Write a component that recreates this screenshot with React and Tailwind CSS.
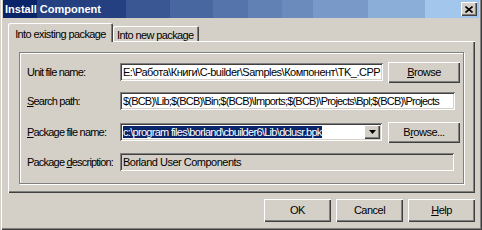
const font = "font-['Liberation_Sans',Arial,sans-serif] text-[11px] tracking-[-0.5px] text-black";

const raised =
  'bg-[#d4d0c8] shadow-[inset_1px_1px_#fff,inset_-1px_-1px_#404040,inset_-2px_-2px_#808080]';
const sunken =
  'shadow-[inset_1px_1px_#808080,inset_-1px_-1px_#fff,inset_2px_2px_#404040,inset_-2px_-2px_#d4d0c8]';

function Button({ children, className = '' }) {
  return (
    <div className={`${raised} flex items-center justify-center ${className}`}>
      <span className="leading-none">{children}</span>
    </div>
  );
}

function Edit({ width, children, disabled, className = '' }) {
  return (
    <div
      className={`${sunken} ${width} h-[18px] ${disabled ? 'bg-[#d4d0c8]' : 'bg-white'} flex items-center overflow-hidden whitespace-nowrap pl-[3px] pr-[2px] ${className}`}
    >
      {children}
    </div>
  );
}

function Row({ label, className = '', children }) {
  return (
    <div className={`flex items-center h-[22px] ${className}`}>
      <div className="w-[93px] shrink-0 whitespace-nowrap tracking-[-0.8px]">{label}</div>
      {children}
    </div>
  );
}

export default function App() {
  return (
    <div
      className={`${font} w-[482px] h-[230px] bg-[#d4d0c8] flex flex-col shadow-[inset_1px_0_#d4d0c8,inset_2px_0_#fff,inset_-1px_-1px_#404040,inset_-2px_-2px_#808080]`}
    >
      {/* title bar */}
      <div className="mx-[3px] h-[18px] flex items-center justify-between pl-[2px] pr-[2px] bg-[linear-gradient(to_right,#0a246a_34px,#244081_34px,#244081_123px,#3a5794_123px,#3a5794_167px,#4866a0_167px,#4866a0_210px,#5574ab_210px,#5574ab_245px,#6180b4_245px,#6180b4_279px,#6b8bbd_279px,#6b8bbd_310px,#799ac9_310px,#799ac9_365px,#8baed9_365px,#8baed9_422px,#a2c6ec_422px)]">
        <span className="text-white font-bold tracking-normal">Install Component</span>
        <div className={`${raised} w-[16px] h-[14px] flex items-center justify-center`}>
          <svg width="8" height="7" viewBox="0 0 8 7">
            <path d="M0.5 0.5 L7.5 6.5 M7.5 0.5 L0.5 6.5" stroke="#000" strokeWidth="1.6" />
          </svg>
        </div>
      </div>

      {/* tabs */}
      <div className="mt-[5px] pl-[8px] pr-[7px]">
        <div className="flex items-start h-[18px]">
          <div className="relative z-10 w-[105px] h-[19px] bg-[#d4d0c8] rounded-t-[2px] shadow-[inset_1px_1px_#fff,inset_-1px_0_#404040,inset_-2px_0_#808080] flex justify-center pt-[3px] tracking-[-0.6px]">
            Into existing package
          </div>
          <div className="mt-[3px] w-[86px] h-[15px] rounded-t-[2px] shadow-[inset_1px_1px_#fff,inset_-1px_0_#404040,inset_-2px_0_#808080] pl-[4px] pt-[1px] whitespace-nowrap tracking-[-0.6px]">
            Into new package
          </div>
        </div>

        <div className="h-[152px] pl-[11px] pt-[11px] shadow-[inset_1px_1px_#fff,inset_-1px_-1px_#404040,inset_-2px_-2px_#808080]">
          <div className="w-[445px] h-[132px] border border-[#808080] shadow-[1px_1px_0_#fff,inset_1px_1px_0_#fff] pl-[7px] pt-[8px]">
            <Row label="Unit file name:">
              <Edit width="w-[263px]">E:\Работа\Книги\C-builder\Samples\Компонент\TK_.CPP</Edit>
              <Button className="ml-[5px] w-[72px] h-[21px]">
                <u>B</u>rowse
              </Button>
            </Row>
            <Row
              className="mt-[7px]"
              label={
                <>
                  <u>S</u>earch path:
                </>
              }
            >
              <Edit width="w-[335px]" className="tracking-[-0.8px]">
                $(BCB)\Lib;$(BCB)\Bin;$(BCB)\Imports;$(BCB)\Projects\Bpl;$(BCB)\Projects
              </Edit>
            </Row>
            <Row
              className="mt-[9px]"
              label={
                <>
                  <u>P</u>ackage file name:
                </>
              }
            >
              <div className={`${sunken} w-[262px] h-[18px] bg-white flex items-center pl-[3px] pr-[2px]`}>
                <div className="flex-1 overflow-hidden whitespace-nowrap tracking-[-0.7px]">
                  <span className="bg-[#0a246a] text-white">
                    c:\program files\borland\cbuilder6\Lib\dclusr.bpk
                  </span>
                </div>
                <div className={`${raised} w-[16px] h-[14px] flex items-center justify-center shrink-0`}>
                  <svg width="7" height="4" viewBox="0 0 7 4">
                    <path d="M0 0 H7 L3.5 4 Z" fill="#000" />
                  </svg>
                </div>
              </div>
              <Button className="ml-[6px] w-[72px] h-[21px]">
                B<u>r</u>owse...
              </Button>
            </Row>
            <Row
              className="mt-[8px]"
              label={
                <>
                  Package <u>d</u>escription:
                </>
              }
            >
              <Edit width="w-[334px]" disabled>
                Borland User Components
              </Edit>
            </Row>
          </div>
        </div>
      </div>

      {/* dialog buttons */}
      <div className="mt-[6px] pr-[7px] flex justify-end gap-[5px]">
        <Button className="w-[67px] h-[23px]">OK</Button>
        <Button className="w-[67px] h-[23px]">Cancel</Button>
        <Button className="w-[67px] h-[23px]">
          <u>H</u>elp
        </Button>
      </div>
    </div>
  );
}
